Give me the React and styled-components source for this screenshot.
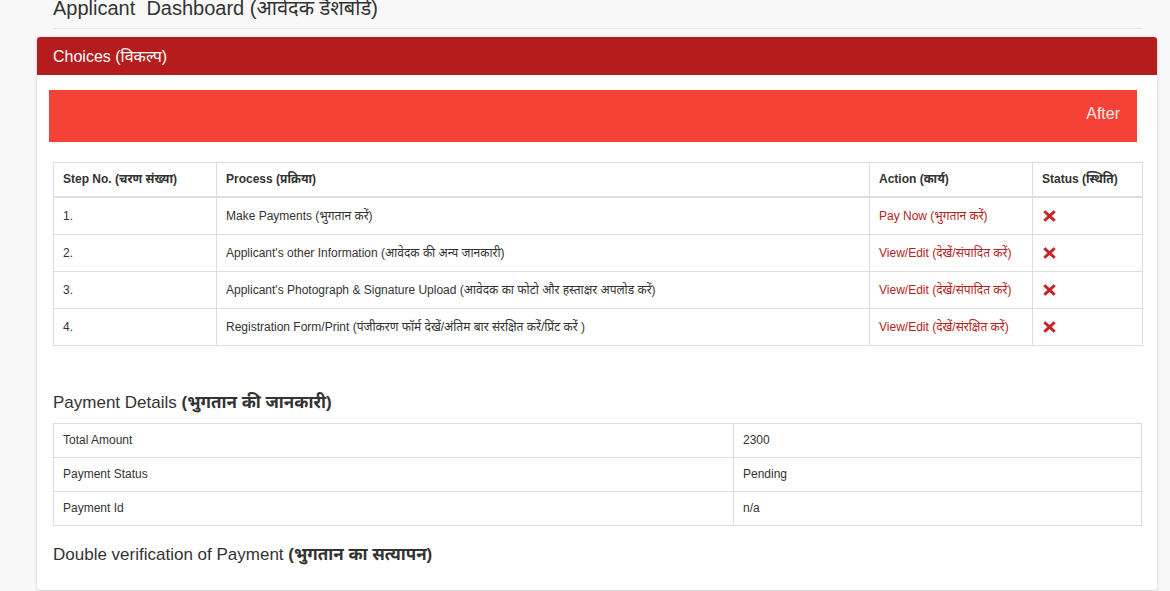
import React from "react";
import styled, { createGlobalStyle } from "styled-components";

const GlobalStyle = createGlobalStyle`
  html, body {
    margin: 0;
    padding: 0;
    background: #f8f8f8;
    font-family: "Liberation Sans", Arial, "Noto Sans", sans-serif;
    color: #333;
    overflow: hidden;
  }
  * { box-sizing: border-box; }
`;

const Page = styled.div`
  width: 1170px;
  height: 591px;
  padding: 0 13px 0 37px;
  overflow: hidden;
`;

const Title = styled.h1`
  margin: 0 15px 0 16px;
  padding: 0 0 12px 0;
  font-size: 20px;
  line-height: 16px;
  font-weight: normal;
  color: #333;
  border-bottom: 1px solid #e6e6e6;
  white-space: nowrap;
`;

const Panel = styled.section`
  margin-top: 8px;
  background: #fff;
  border-radius: 3px;
  box-shadow: 0 1px 3px rgba(0, 0, 0, 0.22);
  padding-bottom: 26px;
`;

const PanelHeading = styled.div`
  height: 38px;
  display: flex;
  align-items: center;
  padding: 0 16px;
  background: #b71c1c;
  color: #fff;
  font-size: 16px;
  border-radius: 3px 3px 0 0;
`;

const PanelBody = styled.div`
  padding: 15px 15px 0 16px;
`;

const Banner = styled.div`
  height: 52px;
  margin: 0 5px 0 -4px;
  background: #f44336;
  color: #fde8e6;
  font-size: 16px;
  display: flex;
  align-items: center;
  justify-content: flex-end;
  padding: 0 17px 5px 0;
`;

const Table = styled.table`
  width: 100%;
  border-collapse: collapse;
  table-layout: fixed;
  margin-top: ${(p) => p.$top || 0}px;
  font-size: 12px;
  color: #333;
`;

const Th = styled.th`
  border: 1px solid #ddd;
  border-bottom-width: 2px;
  padding: 8px 9px;
  line-height: 17px;
  text-align: left;
  font-weight: bold;
  width: ${(p) => p.$w}px;
  white-space: nowrap;
`;

const Td = styled.td`
  border: 1px solid #ddd;
  padding: ${(p) => (p.$compact ? "8px 9px" : "9px 9px")};
  line-height: ${(p) => (p.$compact ? "17px" : "18px")};
  vertical-align: middle;
  white-space: nowrap;
  width: ${(p) => (p.$w ? `${p.$w}px` : "auto")};
`;

const ActionLink = styled.a`
  color: #b52222;
  text-decoration: none;
`;

const Heading = styled.h4`
  margin: ${(p) => p.$top}px 0 ${(p) => p.$bottom}px 0;
  font-size: 17px;
  line-height: 19px;
  font-weight: normal;
  color: #333;
  white-space: nowrap;

  b {
    font-weight: bold;
  }
`;

const CrossIcon = styled.svg`
  display: block;
  width: 13px;
  height: 12px;
  margin-left: 1px;
`;

const Cross = () => (
  <CrossIcon viewBox="0 0 13 12">
    <path
      d="M2.2 0.6 L6.5 4.3 L10.8 0.6 L12.4 2.2 L8.4 6 L12.4 9.8 L10.8 11.4 L6.5 7.7 L2.2 11.4 L0.6 9.8 L4.6 6 L0.6 2.2 Z"
      fill="#c42222"
      stroke="#c42222"
      strokeWidth="0.6"
      strokeLinejoin="round"
    />
  </CrossIcon>
);

const steps = [
  { no: "1.", process: "Make Payments (भुगतान करें)", action: "Pay Now (भुगतान करें)" },
  { no: "2.", process: "Applicant's other Information (आवेदक की अन्य जानकारी)", action: "View/Edit (देखें/संपादित करें)" },
  { no: "3.", process: "Applicant's Photograph & Signature Upload (आवेदक का फोटो और हस्ताक्षर अपलोड करें)", action: "View/Edit (देखें/संपादित करें)" },
  { no: "4.", process: "Registration Form/Print (पंजीकरण फॉर्म देखें/अंतिम बार संरक्षित करें/प्रिंट करें )", action: "View/Edit (देखें/संरक्षित करें)" },
];

const payment = [
  ["Total Amount", "2300"],
  ["Payment Status", "Pending"],
  ["Payment Id", "n/a"],
];

export default function App() {
  return (
    <>
      <GlobalStyle />
      <Page>
        <Title>Applicant&nbsp; Dashboard (आवेदक डैशबोर्ड)</Title>
        <Panel>
          <PanelHeading>Choices (विकल्प)</PanelHeading>
          <PanelBody>
            <Banner>After</Banner>
            <Table $top={20}>
              <thead>
                <tr>
                  <Th $w={163}>Step No. (चरण संख्या)</Th>
                  <Th $w={653}>Process (प्रक्रिया)</Th>
                  <Th $w={163}>Action (कार्य)</Th>
                  <Th $w={110}>Status (स्थिति)</Th>
                </tr>
              </thead>
              <tbody>
                {steps.map((s) => (
                  <tr key={s.no}>
                    <Td>{s.no}</Td>
                    <Td>{s.process}</Td>
                    <Td>
                      <ActionLink href="#">{s.action}</ActionLink>
                    </Td>
                    <Td>
                      <Cross />
                    </Td>
                  </tr>
                ))}
              </tbody>
            </Table>

            <Heading $top={47} $bottom={11}>
              Payment Details <b>(भुगतान की जानकारी)</b>
            </Heading>
            <Table>
              <tbody>
                {payment.map(([k, v]) => (
                  <tr key={k}>
                    <Td $compact $w={680}>{k}</Td>
                    <Td $compact>{v}</Td>
                  </tr>
                ))}
              </tbody>
            </Table>

            <Heading $top={19} $bottom={0}>
              Double verification of Payment <b>(भुगतान का सत्यापन)</b>
            </Heading>
          </PanelBody>
        </Panel>
      </Page>
    </>
  );
}
